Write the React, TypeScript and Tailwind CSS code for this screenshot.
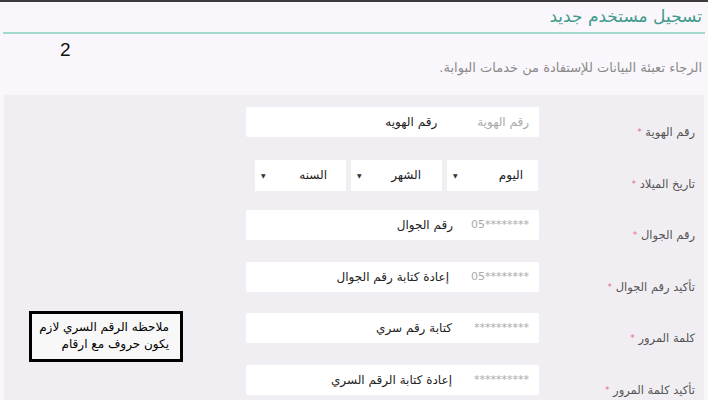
import React from "react";

const ar = { fontFamily: '"DejaVu Sans", "Noto Sans", sans-serif' };

function Label({ text }: { text: string }) {
  return (
    <div className="w-[165px] shrink-0 pr-[9px] pt-[16px] text-[11.5px] leading-[18px] text-[#555]" style={ar}>
      {text} <span className="text-[#e46d9b] text-[9px] align-top">*</span>
    </div>
  );
}

function Field({ ph, val, gap, ltr }: { ph: string; val: string; gap: number; ltr?: boolean }) {
  return (
    <div className="w-[293px] shrink-0 h-[30px] bg-white rounded-[2px] flex items-center pr-[10px]" style={ar}>
      <span dir={ltr ? "ltr" : undefined} className={ltr ? "text-[11px] text-[#aaa]" : "text-[12px] text-[#aaa]"}>{ph}</span>
      <span className="text-[12px] text-[#222]" style={{ marginRight: gap }}>{val}</span>
    </div>
  );
}

function Sel({ t, pr }: { t: string; pr: number }) {
  return (
    <div className="w-[91px] h-[31px] bg-white flex items-center justify-between pl-[6px]" style={{ ...ar, paddingRight: pr }}>
      <span className="text-[12px] text-[#222]">{t}</span>
      <span className="text-[6px] text-[#333]">▼</span>
    </div>
  );
}

export default function App() {
  return (
    <div dir="rtl" className="w-[708px] h-[400px] overflow-hidden bg-[#faf7fc] border-t-2 border-[#3c3c3c]" style={ar}>
      <div className="mx-[3px] h-[32px] border-b-2 border-[#a5d8cf] flex items-center pr-[3px]">
        <div className="text-[17px] text-[#3f9a8b] leading-none pb-[2px]">تسجيل مستخدم جديد</div>
      </div>
      <div className="h-[61px] flex justify-between pr-[6px] pl-[60px]">
        <div className="text-[13px] text-[#8a8a8a] pt-[24px]">الرجاء تعبئة البيانات للإستفادة من خدمات البوابة.</div>
        <div className="text-[19px] text-[#111] pt-[4px] leading-[24px]" style={{ fontFamily: '"Liberation Sans", sans-serif' }}>2</div>
      </div>
      <div className="mx-[4px] h-[305px] bg-[#f1eef3] pt-[12px] flex flex-col gap-[21.6px]">
        <div className="flex h-[30px]">
          <Label text="رقم الهوية" />
          <Field ph="رقم الهوية" val="رقم الهويه" gap={40} />
        </div>
        <div className="flex h-[30px]">
          <Label text="تاريخ الميلاد" />
          <div className="w-[293px] shrink-0 flex gap-[5px] pr-[1px] pt-[1px]">
            <Sel t="اليوم" pr={15} />
            <Sel t="الشهر" pr={21} />
            <Sel t="السنه" pr={19} />
          </div>
        </div>
        <div className="flex h-[30px]">
          <Label text="رقم الجوال" />
          <Field ph="05********" val="رقم الجوال" gap={18} ltr />
        </div>
        <div className="flex h-[30px]">
          <Label text="تأكيد رقم الجوال" />
          <Field ph="05********" val="إعادة كتابة رقم الجوال" gap={22} ltr />
        </div>
        <div className="flex h-[30px]">
          <Label text="كلمة المرور" />
          <Field ph="**********" val="كتابة رقم سري" gap={22} ltr />
          <div className="flex-1 pr-[63px]">
            <div className="-mt-[2px] w-[154px] h-[51px] border-[3px] border-black bg-[#f8f8f8] pr-[11px] pt-[5px] text-[12px] leading-[17px] text-black" style={ar}>
              <div>ملاحظه الرقم السري لازم</div>
              <div>يكون حروف مع ارقام</div>
            </div>
          </div>
        </div>
        <div className="flex h-[30px]">
          <Label text="تأكيد كلمة المرور" />
          <Field ph="**********" val="إعادة كتابة الرقم السري" gap={22} ltr />
        </div>
      </div>
    </div>
  );
}
